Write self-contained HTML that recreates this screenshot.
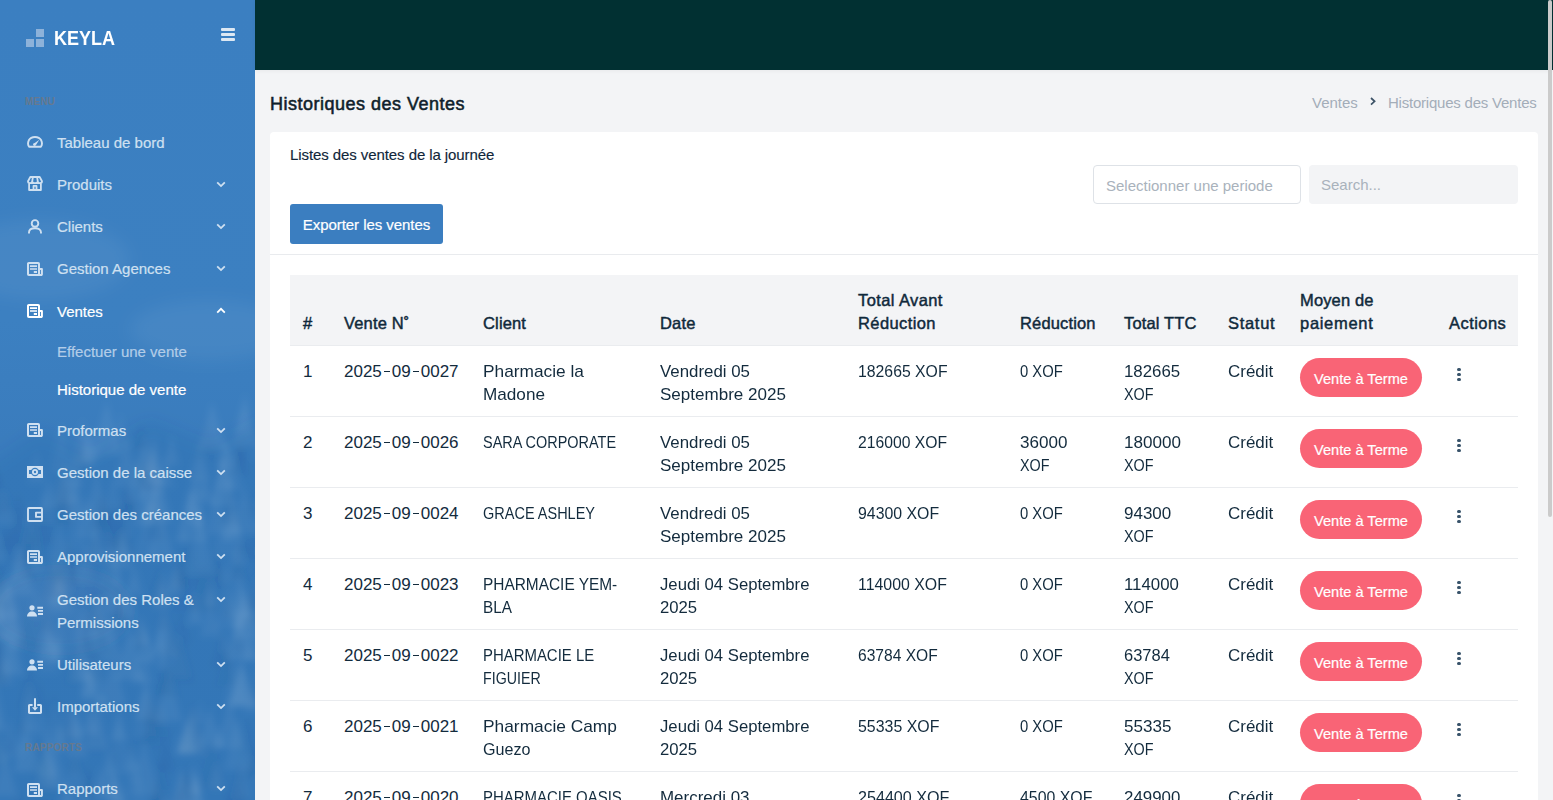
<!DOCTYPE html>
<html><head><meta charset="utf-8">
<style>
*{box-sizing:border-box;margin:0;padding:0}
html,body{width:1553px;height:800px;overflow:hidden;background:#f3f4f6;font-family:"Liberation Sans",sans-serif}
#side{position:absolute;left:0;top:0;width:255px;height:800px;background:linear-gradient(180deg,#3b7fc1 0%,#3c80c1 40%,#3a7cbd 55%,#397bbc 100%);overflow:hidden}
#tex{position:absolute;left:0;top:0}
#top{position:absolute;left:255px;top:0;width:1298px;height:70px;background:#013032;box-shadow:0 1px 4px rgba(0,0,0,.05)}
.logo{position:absolute;left:26px;top:29px}
.logo i{position:absolute;width:8px;height:8px;background:#8db2da}
.brand{position:absolute;left:54px;top:27px;color:#fff;font-weight:700;font-size:20px;line-height:22px;transform:scaleX(.9);transform-origin:0 0}
.burger{position:absolute;left:221px;top:28px;width:14px}
.burger i{position:absolute;left:0;width:14px;height:3px;background:#dde8f3;border-radius:1px}
.sec{position:absolute;left:25px;font-size:10px;font-weight:700;color:#66798f;letter-spacing:.2px;line-height:12px}
.it,.iti,.it.act,.it.acti{position:absolute;left:0;top:0;width:255px;color:#cfe0f1;font-size:15px;line-height:23px}
.it.act,.it.acti{color:#fff}
.it .tx{position:absolute;left:57px;top:0;white-space:nowrap;-webkit-text-stroke:.2px currentColor}
svg.ic,svg.ch{position:absolute}
.sub{position:absolute;left:57px;font-size:15px;color:#b3cde8;white-space:nowrap;line-height:23px;-webkit-text-stroke:.2px currentColor}
.sub.act{color:#fff}
#title{position:absolute;left:270px;top:93px;font-size:18px;font-weight:400;-webkit-text-stroke:.55px #0f1e2b;color:#0f1e2b;line-height:22px;letter-spacing:.5px}
#bc{position:absolute;left:1312px;top:92px;font-size:15px;color:#a3adb9;line-height:22px;white-space:nowrap}
#bc svg{position:absolute;left:58px;top:5px}
#bc .b2{position:absolute;left:76px;top:0;letter-spacing:-.22px}
#card{position:absolute;left:270px;top:132px;width:1268px;height:700px;background:#fff;border-radius:4px}
.lst{position:absolute;left:20px;top:14px;font-size:15px;color:#10263a;line-height:18px;white-space:nowrap;-webkit-text-stroke:.15px #10263a;letter-spacing:-.08px}
.inp1{position:absolute;left:823px;top:33px;width:208px;height:39px;border:1px solid #dee2e7;border-radius:4px;background:#fff;font-size:15px;color:#a9b2bc;padding:11px 0 0 12px;line-height:18px;white-space:nowrap}
.inp2{position:absolute;left:1039px;top:33px;width:209px;height:39px;border-radius:4px;background:#f3f4f6;font-size:15px;color:#a9b2bc;padding:11px 0 0 12px;line-height:18px}
.btn{position:absolute;left:20px;top:72px;width:153px;height:40px;border-radius:3px;background:#3b7ec0;color:#fff;font-size:15px;line-height:42px;text-align:center;white-space:nowrap;-webkit-text-stroke:.2px #fff;letter-spacing:-.05px}
.hr{position:absolute;left:0;top:122px;width:1268px;height:1px;background:#e9ebee}
#sb{position:absolute;left:1548px;top:0;width:4px;height:517px;border-radius:2px;background:#cbcbcb}
#thead{position:absolute;left:290px;top:275px;width:1228px;height:70px;background:#f3f4f6}
.h{position:absolute;font-size:16.5px;font-weight:400;-webkit-text-stroke:.45px #10293b;color:#10293b;line-height:23px;white-space:nowrap;letter-spacing:.15px}
.row{position:absolute;left:290px;width:1228px;height:71px;border-top:1px solid #eaecef;background:#fff}
.c{position:absolute;top:14px;font-size:17px;color:#132b3d;line-height:23px;white-space:nowrap;transform-origin:0 0}
.c0{}
.d{display:inline-block;width:6.4px;height:1.4px;background:currentColor;margin:0 1.8px;vertical-align:5px}

.badge{position:absolute;left:1010px;top:12px;width:122px;height:39px;border-radius:20px;background:#f96476;color:#fff;font-size:14.6px;line-height:43px;-webkit-text-stroke:.2px #fff;text-align:center;white-space:nowrap}
.kebab{position:absolute;left:1167.3px;top:21.5px;width:4px}
.kebab i{position:absolute;left:.2px;width:3.3px;height:3.3px;border-radius:50%;background:#38536a}
</style></head>
<body>
<div id="side">
<svg id="tex" width="255" height="800" viewBox="0 0 255 800"><defs><filter id="bl"><feGaussianBlur stdDeviation="3"/></filter><filter id="bl2"><feGaussianBlur stdDeviation="8"/></filter></defs><g filter="url(#bl2)"><ellipse cx="40" cy="260" rx="90" ry="40" fill="#fff" fill-opacity=".05"/><ellipse cx="210" cy="330" rx="80" ry="30" fill="#fff" fill-opacity=".05"/><path d="M-20 470 L40 430 L90 455 L150 420 L210 445 L280 410 L280 820 L-20 820Z" fill="#1d4f8a" fill-opacity=".10"/><ellipse cx="60" cy="610" rx="70" ry="40" fill="#fff" fill-opacity=".03"/></g><g filter="url(#bl)"><path d="M114.4 766.0L124.0 802.3H104.9Z" fill="#ffffff" fill-opacity="0.046"/><path d="M130.8 731.3L136.5 754.6H125.0Z" fill="#0b3c70" fill-opacity="0.028"/><path d="M180.7 769.1L195.4 822.9H166.0Z" fill="#ffffff" fill-opacity="0.047"/><path d="M-5.9 476.4L0.6 503.0H-12.4Z" fill="#ffffff" fill-opacity="0.026"/><path d="M111.1 619.1L122.3 661.5H100.0Z" fill="#ffffff" fill-opacity="0.048"/><path d="M66.5 779.1L80.2 828.6H52.8Z" fill="#ffffff" fill-opacity="0.036"/><path d="M69.5 706.6L79.3 740.6H59.7Z" fill="#0b3c70" fill-opacity="0.039"/><path d="M223.0 454.2L236.5 506.0H209.5Z" fill="#ffffff" fill-opacity="0.059"/><path d="M10.1 724.1L16.9 753.6H3.3Z" fill="#0b3c70" fill-opacity="0.037"/><path d="M198.5 504.8L203.9 528.4H193.1Z" fill="#ffffff" fill-opacity="0.053"/><path d="M143.8 480.7L154.5 526.4H133.1Z" fill="#ffffff" fill-opacity="0.048"/><path d="M105.7 497.9L121.1 551.8H90.3Z" fill="#0b3c70" fill-opacity="0.036"/><path d="M47.9 734.7L57.8 777.2H38.1Z" fill="#ffffff" fill-opacity="0.060"/><path d="M61.0 567.5L68.0 597.9H54.0Z" fill="#ffffff" fill-opacity="0.028"/><path d="M56.8 571.8L67.5 607.7H46.2Z" fill="#ffffff" fill-opacity="0.042"/><path d="M228.3 438.4L243.1 490.2H213.5Z" fill="#ffffff" fill-opacity="0.034"/><path d="M193.3 488.9L208.8 542.1H177.8Z" fill="#ffffff" fill-opacity="0.046"/><path d="M18.6 787.6L26.4 816.0H10.7Z" fill="#0b3c70" fill-opacity="0.034"/><path d="M154.0 467.8L164.4 513.0H143.6Z" fill="#ffffff" fill-opacity="0.033"/><path d="M224.4 504.7L236.9 556.9H211.9Z" fill="#ffffff" fill-opacity="0.026"/><path d="M112.6 476.1L121.4 509.0H103.8Z" fill="#ffffff" fill-opacity="0.030"/><path d="M235.0 661.3L246.9 705.5H223.1Z" fill="#ffffff" fill-opacity="0.030"/><path d="M-5.1 678.0L7.1 731.7H-17.2Z" fill="#ffffff" fill-opacity="0.047"/><path d="M190.9 807.1L196.9 829.8H184.9Z" fill="#0b3c70" fill-opacity="0.051"/><path d="M192.7 701.5L205.8 753.5H179.6Z" fill="#0b3c70" fill-opacity="0.049"/><path d="M229.6 698.1L243.0 748.3H216.1Z" fill="#ffffff" fill-opacity="0.047"/><path d="M150.2 449.0L162.9 491.4H137.5Z" fill="#0b3c70" fill-opacity="0.056"/><path d="M96.8 646.5L107.0 681.9H86.6Z" fill="#0b3c70" fill-opacity="0.028"/><path d="M-1.8 623.1L6.0 651.1H-9.6Z" fill="#0b3c70" fill-opacity="0.042"/><path d="M243.1 403.6L251.6 434.2H234.7Z" fill="#ffffff" fill-opacity="0.032"/><path d="M239.1 567.0L251.9 618.2H226.3Z" fill="#ffffff" fill-opacity="0.048"/><path d="M108.5 749.0L121.4 799.8H95.6Z" fill="#ffffff" fill-opacity="0.045"/><path d="M27.4 722.5L41.3 772.3H13.6Z" fill="#ffffff" fill-opacity="0.058"/><path d="M36.5 542.9L43.5 570.4H29.5Z" fill="#ffffff" fill-opacity="0.047"/><path d="M76.7 788.0L85.0 823.8H68.5Z" fill="#0b3c70" fill-opacity="0.026"/><path d="M1.4 653.3L10.2 684.1H-7.4Z" fill="#ffffff" fill-opacity="0.026"/><path d="M115.1 735.0L121.7 763.3H108.4Z" fill="#0b3c70" fill-opacity="0.027"/><path d="M112.8 657.1L127.1 705.4H98.5Z" fill="#ffffff" fill-opacity="0.049"/><path d="M120.7 412.6L130.8 449.2H110.5Z" fill="#ffffff" fill-opacity="0.031"/><path d="M85.1 619.0L96.8 660.5H73.4Z" fill="#0b3c70" fill-opacity="0.039"/><path d="M239.2 757.2L249.8 802.5H228.6Z" fill="#0b3c70" fill-opacity="0.041"/><path d="M240.2 609.4L254.7 660.2H225.8Z" fill="#ffffff" fill-opacity="0.058"/><path d="M169.1 672.6L182.4 721.2H155.8Z" fill="#ffffff" fill-opacity="0.050"/><path d="M237.5 783.0L248.5 821.8H226.5Z" fill="#0b3c70" fill-opacity="0.036"/><path d="M225.3 434.2L234.8 469.6H215.9Z" fill="#ffffff" fill-opacity="0.052"/><path d="M-2.2 469.2L9.2 517.2H-13.6Z" fill="#0b3c70" fill-opacity="0.037"/><path d="M28.6 604.8L41.7 650.1H15.6Z" fill="#0b3c70" fill-opacity="0.049"/><path d="M125.5 484.9L132.8 512.6H118.1Z" fill="#0b3c70" fill-opacity="0.035"/><path d="M165.7 731.8L175.5 771.4H155.9Z" fill="#0b3c70" fill-opacity="0.038"/><path d="M237.6 716.1L251.9 770.0H223.4Z" fill="#ffffff" fill-opacity="0.045"/><path d="M137.4 662.4L143.6 683.4H131.1Z" fill="#ffffff" fill-opacity="0.043"/><path d="M210.3 592.5L220.5 636.7H200.1Z" fill="#ffffff" fill-opacity="0.044"/><path d="M253.1 524.1L261.7 560.7H244.6Z" fill="#0b3c70" fill-opacity="0.040"/><path d="M237.7 538.1L244.9 564.8H230.4Z" fill="#ffffff" fill-opacity="0.057"/><path d="M204.3 474.9L212.0 502.9H196.6Z" fill="#ffffff" fill-opacity="0.036"/><path d="M160.4 699.4L166.8 723.7H154.0Z" fill="#ffffff" fill-opacity="0.034"/><path d="M135.8 561.8L145.0 596.2H126.7Z" fill="#ffffff" fill-opacity="0.031"/><path d="M163.6 606.8L177.1 656.6H150.1Z" fill="#ffffff" fill-opacity="0.055"/><path d="M193.7 763.4L201.4 794.5H186.0Z" fill="#ffffff" fill-opacity="0.057"/><path d="M264.5 479.3L272.5 507.7H256.6Z" fill="#ffffff" fill-opacity="0.034"/><path d="M218.8 724.0L225.1 748.4H212.6Z" fill="#ffffff" fill-opacity="0.049"/><path d="M45.3 745.3L57.8 799.2H32.7Z" fill="#0b3c70" fill-opacity="0.043"/><path d="M128.3 514.9L133.5 537.4H123.0Z" fill="#ffffff" fill-opacity="0.026"/><path d="M131.6 490.2L137.9 516.6H125.2Z" fill="#0b3c70" fill-opacity="0.054"/><path d="M244.9 393.4L258.7 446.7H231.1Z" fill="#ffffff" fill-opacity="0.052"/><path d="M118.4 579.3L127.7 620.4H109.1Z" fill="#0b3c70" fill-opacity="0.050"/><path d="M39.8 702.4L48.0 736.5H31.7Z" fill="#ffffff" fill-opacity="0.031"/><path d="M-5.8 720.0L7.2 764.7H-18.7Z" fill="#ffffff" fill-opacity="0.047"/><path d="M154.9 775.4L166.7 823.5H143.1Z" fill="#0b3c70" fill-opacity="0.057"/><path d="M203.9 560.9L218.9 612.3H189.0Z" fill="#0b3c70" fill-opacity="0.049"/><path d="M200.4 700.4L206.1 722.9H194.8Z" fill="#ffffff" fill-opacity="0.041"/><path d="M87.8 667.7L96.1 695.8H79.5Z" fill="#ffffff" fill-opacity="0.048"/><path d="M171.4 622.0L181.5 655.6H161.3Z" fill="#0b3c70" fill-opacity="0.047"/><path d="M199.5 439.3L211.1 480.9H187.8Z" fill="#ffffff" fill-opacity="0.034"/><path d="M3.9 578.2L9.6 601.6H-1.8Z" fill="#ffffff" fill-opacity="0.057"/><path d="M129.7 625.3L144.6 680.1H114.7Z" fill="#ffffff" fill-opacity="0.053"/><path d="M154.3 432.5L166.8 485.1H141.9Z" fill="#ffffff" fill-opacity="0.042"/><path d="M126.3 434.0L139.9 487.1H112.6Z" fill="#ffffff" fill-opacity="0.043"/><path d="M90.5 661.1L100.3 700.7H80.8Z" fill="#ffffff" fill-opacity="0.050"/><path d="M-6.1 458.2L1.0 483.7H-13.3Z" fill="#0b3c70" fill-opacity="0.039"/><path d="M195.8 772.4L208.0 825.5H183.6Z" fill="#ffffff" fill-opacity="0.057"/><path d="M121.3 530.5L132.7 568.8H110.0Z" fill="#ffffff" fill-opacity="0.050"/><path d="M259.2 657.4L265.7 681.4H252.6Z" fill="#ffffff" fill-opacity="0.041"/><path d="M4.3 488.7L14.1 524.2H-5.5Z" fill="#ffffff" fill-opacity="0.041"/><path d="M150.1 707.6L161.7 746.2H138.5Z" fill="#0b3c70" fill-opacity="0.058"/><path d="M55.6 742.0L68.5 789.4H42.7Z" fill="#ffffff" fill-opacity="0.038"/><path d="M178.4 634.8L190.3 677.0H166.5Z" fill="#ffffff" fill-opacity="0.032"/><path d="M259.4 763.8L264.3 785.2H254.5Z" fill="#ffffff" fill-opacity="0.034"/><path d="M161.4 626.3L166.6 648.9H156.2Z" fill="#ffffff" fill-opacity="0.049"/><path d="M163.6 603.4L170.4 630.8H156.7Z" fill="#0b3c70" fill-opacity="0.051"/><path d="M10.4 717.4L22.3 759.3H-1.4Z" fill="#ffffff" fill-opacity="0.032"/><path d="M61.0 570.0L73.8 612.9H48.1Z" fill="#ffffff" fill-opacity="0.036"/><path d="M195.2 591.3L202.8 624.2H187.5Z" fill="#ffffff" fill-opacity="0.056"/><path d="M12.8 606.3L23.7 650.3H1.9Z" fill="#ffffff" fill-opacity="0.052"/><path d="M48.6 478.4L57.2 509.0H40.1Z" fill="#ffffff" fill-opacity="0.049"/><path d="M29.3 698.1L37.0 730.9H21.6Z" fill="#ffffff" fill-opacity="0.050"/><path d="M242.6 763.0L252.7 798.3H232.5Z" fill="#ffffff" fill-opacity="0.036"/><path d="M99.9 765.1L107.1 793.8H92.7Z" fill="#ffffff" fill-opacity="0.038"/><path d="M98.8 491.5L110.1 531.2H87.5Z" fill="#0b3c70" fill-opacity="0.044"/><path d="M144.8 685.4L157.3 736.3H132.3Z" fill="#ffffff" fill-opacity="0.026"/><path d="M139.6 774.8L151.9 817.6H127.4Z" fill="#ffffff" fill-opacity="0.027"/><path d="M206.7 413.9L220.1 459.7H193.3Z" fill="#0b3c70" fill-opacity="0.028"/><path d="M29.6 681.2L36.5 709.8H22.7Z" fill="#ffffff" fill-opacity="0.052"/><path d="M200.3 520.0L215.1 573.9H185.5Z" fill="#ffffff" fill-opacity="0.042"/><path d="M188.3 764.2L198.1 798.6H178.4Z" fill="#0b3c70" fill-opacity="0.048"/><path d="M211.6 735.7L226.2 789.2H197.0Z" fill="#0b3c70" fill-opacity="0.043"/><path d="M210.6 580.6L217.7 605.7H203.6Z" fill="#ffffff" fill-opacity="0.060"/><path d="M36.1 586.8L45.1 617.0H27.1Z" fill="#ffffff" fill-opacity="0.027"/><path d="M21.6 726.2L27.6 752.5H15.5Z" fill="#ffffff" fill-opacity="0.041"/><path d="M240.1 437.4L246.4 463.8H233.7Z" fill="#0b3c70" fill-opacity="0.033"/><path d="M153.6 484.0L160.7 513.9H146.5Z" fill="#ffffff" fill-opacity="0.052"/><path d="M140.8 615.5L149.3 644.6H132.3Z" fill="#ffffff" fill-opacity="0.057"/><path d="M140.5 621.6L146.9 649.3H134.2Z" fill="#0b3c70" fill-opacity="0.058"/><path d="M95.9 624.3L104.7 653.9H87.0Z" fill="#ffffff" fill-opacity="0.048"/><path d="M-7.0 562.0L6.3 609.9H-20.3Z" fill="#ffffff" fill-opacity="0.046"/><path d="M33.2 509.9L46.4 560.3H19.9Z" fill="#0b3c70" fill-opacity="0.047"/><path d="M63.3 478.8L73.9 525.8H52.7Z" fill="#0b3c70" fill-opacity="0.054"/><path d="M216.1 489.4L226.5 534.5H205.6Z" fill="#ffffff" fill-opacity="0.042"/><path d="M252.8 744.4L261.5 775.0H244.1Z" fill="#0b3c70" fill-opacity="0.040"/><path d="M15.0 525.0L25.3 564.0H4.7Z" fill="#0b3c70" fill-opacity="0.031"/><path d="M75.6 456.2L83.6 486.9H67.7Z" fill="#ffffff" fill-opacity="0.050"/><path d="M179.0 552.9L189.7 589.0H168.2Z" fill="#0b3c70" fill-opacity="0.054"/><path d="M-6.6 698.7L1.0 727.0H-14.2Z" fill="#ffffff" fill-opacity="0.041"/><path d="M262.7 490.0L273.0 531.5H252.4Z" fill="#ffffff" fill-opacity="0.038"/><path d="M72.0 562.1L82.6 605.5H61.4Z" fill="#0b3c70" fill-opacity="0.032"/><path d="M80.6 635.9L91.9 681.2H69.3Z" fill="#ffffff" fill-opacity="0.054"/><path d="M28.7 664.4L39.4 709.2H18.0Z" fill="#0b3c70" fill-opacity="0.039"/><path d="M153.0 499.4L159.0 524.9H147.0Z" fill="#ffffff" fill-opacity="0.039"/><path d="M243.2 596.0L255.2 638.6H231.1Z" fill="#ffffff" fill-opacity="0.054"/><path d="M81.1 434.5L90.6 468.5H71.7Z" fill="#0b3c70" fill-opacity="0.059"/><path d="M171.6 433.8L179.5 465.4H163.6Z" fill="#ffffff" fill-opacity="0.048"/><path d="M93.8 704.1L107.1 753.0H80.6Z" fill="#0b3c70" fill-opacity="0.031"/><path d="M238.3 543.2L247.2 580.8H229.5Z" fill="#0b3c70" fill-opacity="0.050"/><path d="M131.9 743.9L139.9 770.8H124.0Z" fill="#ffffff" fill-opacity="0.047"/><path d="M12.9 631.1L24.0 675.5H1.8Z" fill="#ffffff" fill-opacity="0.058"/><path d="M117.3 795.0L124.6 819.8H110.1Z" fill="#ffffff" fill-opacity="0.044"/><path d="M144.1 740.4L159.8 795.1H128.4Z" fill="#ffffff" fill-opacity="0.046"/><path d="M216.8 760.9L224.4 789.4H209.2Z" fill="#ffffff" fill-opacity="0.054"/><path d="M140.7 423.0L148.5 449.3H132.8Z" fill="#0b3c70" fill-opacity="0.058"/><path d="M74.6 704.0L83.6 737.4H65.6Z" fill="#ffffff" fill-opacity="0.053"/><path d="M44.9 489.1L53.8 522.6H35.9Z" fill="#ffffff" fill-opacity="0.031"/><path d="M62.5 549.5L72.2 592.0H52.8Z" fill="#ffffff" fill-opacity="0.048"/><path d="M253.8 591.6L263.2 626.0H244.5Z" fill="#0b3c70" fill-opacity="0.049"/><path d="M196.7 778.6L211.0 827.9H182.5Z" fill="#ffffff" fill-opacity="0.039"/><path d="M145.6 624.5L155.5 662.9H135.8Z" fill="#ffffff" fill-opacity="0.057"/><path d="M5.0 750.5L17.3 796.1H-7.3Z" fill="#ffffff" fill-opacity="0.051"/><path d="M153.2 448.0L162.6 483.7H143.8Z" fill="#ffffff" fill-opacity="0.039"/><path d="M181.1 512.4L188.9 543.1H173.3Z" fill="#ffffff" fill-opacity="0.033"/><path d="M240.6 657.8L253.5 708.2H227.7Z" fill="#ffffff" fill-opacity="0.053"/><path d="M195.3 770.1L202.0 793.6H188.7Z" fill="#ffffff" fill-opacity="0.029"/><path d="M251.5 486.2L259.1 516.7H243.9Z" fill="#0b3c70" fill-opacity="0.027"/><path d="M214.2 539.3L223.5 579.8H205.0Z" fill="#0b3c70" fill-opacity="0.026"/><path d="M74.7 751.9L88.8 806.1H60.5Z" fill="#ffffff" fill-opacity="0.032"/><path d="M243.7 484.3L256.1 533.6H231.3Z" fill="#ffffff" fill-opacity="0.042"/><path d="M231.9 499.3L242.0 541.4H221.8Z" fill="#ffffff" fill-opacity="0.056"/><path d="M19.2 543.7L34.1 595.2H4.2Z" fill="#ffffff" fill-opacity="0.050"/><path d="M181.4 609.4L186.9 632.2H175.9Z" fill="#0b3c70" fill-opacity="0.036"/><path d="M44.0 501.7L56.3 544.9H31.7Z" fill="#0b3c70" fill-opacity="0.038"/><path d="M233.2 504.9L242.2 535.4H224.2Z" fill="#ffffff" fill-opacity="0.048"/><path d="M166.0 787.9L175.4 823.3H156.6Z" fill="#ffffff" fill-opacity="0.044"/><path d="M154.9 493.4L166.1 541.5H143.8Z" fill="#0b3c70" fill-opacity="0.035"/><path d="M57.6 636.2L65.4 662.8H49.9Z" fill="#ffffff" fill-opacity="0.060"/><path d="M116.9 558.5L130.7 611.1H103.2Z" fill="#ffffff" fill-opacity="0.031"/><path d="M167.4 651.6L179.9 699.0H154.9Z" fill="#0b3c70" fill-opacity="0.043"/><path d="M178.2 785.6L185.6 811.7H170.8Z" fill="#0b3c70" fill-opacity="0.031"/><path d="M54.7 700.4L68.2 747.9H41.2Z" fill="#ffffff" fill-opacity="0.033"/><path d="M50.8 631.4L56.6 652.6H45.1Z" fill="#ffffff" fill-opacity="0.050"/><path d="M230.0 468.3L235.4 489.0H224.6Z" fill="#ffffff" fill-opacity="0.040"/><path d="M62.3 458.4L76.2 510.2H48.5Z" fill="#0b3c70" fill-opacity="0.044"/><path d="M55.4 549.2L60.8 570.7H50.1Z" fill="#ffffff" fill-opacity="0.047"/><path d="M62.8 457.3L74.4 506.0H51.2Z" fill="#ffffff" fill-opacity="0.034"/><path d="M179.9 730.7L185.6 752.9H174.3Z" fill="#ffffff" fill-opacity="0.038"/><path d="M256.9 572.4L270.8 619.1H243.0Z" fill="#ffffff" fill-opacity="0.030"/><path d="M194.9 472.4L206.9 523.5H182.8Z" fill="#ffffff" fill-opacity="0.039"/><path d="M106.7 400.5L122.2 455.4H91.2Z" fill="#ffffff" fill-opacity="0.051"/><path d="M59.6 523.3L70.3 559.5H49.0Z" fill="#ffffff" fill-opacity="0.038"/><path d="M259.8 426.0L269.2 460.1H250.5Z" fill="#ffffff" fill-opacity="0.027"/><path d="M181.0 631.5L194.3 682.6H167.8Z" fill="#0b3c70" fill-opacity="0.039"/><path d="M94.8 522.6L102.5 554.8H87.1Z" fill="#ffffff" fill-opacity="0.044"/><path d="M46.0 601.5L54.0 632.3H38.0Z" fill="#0b3c70" fill-opacity="0.060"/><path d="M227.2 560.4L233.5 582.9H221.0Z" fill="#ffffff" fill-opacity="0.038"/><path d="M-4.9 526.9L5.0 560.7H-14.8Z" fill="#ffffff" fill-opacity="0.050"/><path d="M89.3 773.2L98.5 805.8H80.1Z" fill="#0b3c70" fill-opacity="0.050"/><path d="M-4.4 586.6L2.3 609.5H-11.1Z" fill="#0b3c70" fill-opacity="0.036"/><path d="M132.8 563.4L139.3 591.8H126.3Z" fill="#ffffff" fill-opacity="0.030"/><path d="M-1.3 584.1L7.9 623.1H-10.4Z" fill="#ffffff" fill-opacity="0.050"/><path d="M189.5 486.1L196.2 513.3H182.8Z" fill="#ffffff" fill-opacity="0.050"/><path d="M96.3 531.4L103.9 561.6H88.7Z" fill="#ffffff" fill-opacity="0.033"/><path d="M-3.3 632.8L11.1 681.1H-17.7Z" fill="#0b3c70" fill-opacity="0.035"/><path d="M242.7 661.6L255.6 705.0H229.9Z" fill="#ffffff" fill-opacity="0.055"/><path d="M163.9 569.5L171.7 603.2H156.2Z" fill="#ffffff" fill-opacity="0.038"/><path d="M126.7 475.4L135.6 509.5H117.8Z" fill="#0b3c70" fill-opacity="0.031"/><path d="M55.9 545.7L64.2 580.5H47.7Z" fill="#0b3c70" fill-opacity="0.045"/><path d="M142.1 442.4L150.6 476.1H133.6Z" fill="#ffffff" fill-opacity="0.027"/><path d="M5.0 648.2L14.1 684.6H-4.1Z" fill="#ffffff" fill-opacity="0.034"/><path d="M85.4 651.5L93.5 680.7H77.4Z" fill="#ffffff" fill-opacity="0.032"/><path d="M159.2 565.3L171.1 605.5H147.3Z" fill="#0b3c70" fill-opacity="0.052"/><path d="M160.7 578.4L169.2 608.1H152.2Z" fill="#ffffff" fill-opacity="0.056"/><path d="M240.1 437.3L249.5 475.0H230.8Z" fill="#0b3c70" fill-opacity="0.038"/><path d="M31.2 500.5L41.8 544.3H20.6Z" fill="#ffffff" fill-opacity="0.025"/><path d="M98.3 595.6L109.7 638.4H86.9Z" fill="#ffffff" fill-opacity="0.047"/><path d="M218.6 557.4L227.9 589.5H209.2Z" fill="#0b3c70" fill-opacity="0.036"/><path d="M181.2 767.8L192.8 816.7H169.7Z" fill="#ffffff" fill-opacity="0.047"/><path d="M145.0 512.9L157.3 559.1H132.8Z" fill="#ffffff" fill-opacity="0.033"/><path d="M79.4 621.5L85.0 645.9H73.8Z" fill="#ffffff" fill-opacity="0.027"/><path d="M183.8 564.6L196.1 611.6H171.5Z" fill="#0b3c70" fill-opacity="0.031"/><path d="M229.2 487.6L240.0 525.4H218.5Z" fill="#0b3c70" fill-opacity="0.039"/><path d="M59.2 563.7L68.2 595.4H50.3Z" fill="#0b3c70" fill-opacity="0.054"/><path d="M146.1 677.7L158.1 719.5H134.0Z" fill="#ffffff" fill-opacity="0.053"/><path d="M93.7 529.6L99.6 556.1H87.7Z" fill="#0b3c70" fill-opacity="0.045"/><path d="M256.9 667.7L266.3 702.3H247.4Z" fill="#0b3c70" fill-opacity="0.039"/><path d="M261.9 687.2L267.4 711.4H256.4Z" fill="#0b3c70" fill-opacity="0.035"/><path d="M263.2 534.2L268.8 555.1H257.7Z" fill="#ffffff" fill-opacity="0.042"/><path d="M75.0 744.1L82.6 774.1H67.4Z" fill="#0b3c70" fill-opacity="0.047"/><path d="M259.8 669.6L270.9 708.8H248.6Z" fill="#ffffff" fill-opacity="0.030"/><path d="M19.5 544.8L28.1 581.9H10.8Z" fill="#ffffff" fill-opacity="0.036"/><path d="M145.6 654.0L152.8 683.6H138.5Z" fill="#ffffff" fill-opacity="0.042"/><path d="M61.4 421.3L74.1 472.5H48.7Z" fill="#ffffff" fill-opacity="0.028"/><path d="M122.9 504.9L136.1 555.2H109.8Z" fill="#0b3c70" fill-opacity="0.040"/><path d="M98.9 612.8L110.6 655.8H87.2Z" fill="#0b3c70" fill-opacity="0.035"/><path d="M227.8 579.8L241.5 629.0H214.0Z" fill="#ffffff" fill-opacity="0.031"/><path d="M36.4 450.6L45.6 483.2H27.3Z" fill="#ffffff" fill-opacity="0.036"/><path d="M-7.1 794.8L-1.7 815.2H-12.5Z" fill="#0b3c70" fill-opacity="0.053"/><path d="M192.2 705.2L206.1 754.1H178.4Z" fill="#ffffff" fill-opacity="0.060"/><path d="M251.4 685.0L259.8 713.8H242.9Z" fill="#ffffff" fill-opacity="0.026"/><path d="M52.5 557.6L64.8 600.5H40.2Z" fill="#0b3c70" fill-opacity="0.038"/><path d="M87.4 763.2L94.6 794.5H80.1Z" fill="#0b3c70" fill-opacity="0.037"/><path d="M48.1 629.5L58.6 673.3H37.7Z" fill="#ffffff" fill-opacity="0.029"/><path d="M86.3 428.9L95.9 466.5H76.7Z" fill="#ffffff" fill-opacity="0.036"/><path d="M251.9 750.4L260.7 781.7H243.1Z" fill="#0b3c70" fill-opacity="0.029"/><path d="M108.3 527.4L117.8 561.7H98.7Z" fill="#ffffff" fill-opacity="0.031"/><path d="M176.2 562.8L182.9 589.2H169.6Z" fill="#ffffff" fill-opacity="0.060"/><path d="M164.5 666.6L172.0 694.0H157.1Z" fill="#0b3c70" fill-opacity="0.056"/><path d="M162.9 643.8L169.8 667.8H156.0Z" fill="#ffffff" fill-opacity="0.049"/><path d="M173.0 567.4L180.6 595.4H165.4Z" fill="#ffffff" fill-opacity="0.045"/><path d="M-1.1 599.2L9.8 640.0H-12.1Z" fill="#ffffff" fill-opacity="0.058"/><path d="M118.9 708.9L127.6 739.9H110.2Z" fill="#ffffff" fill-opacity="0.060"/><path d="M228.6 788.8L237.6 826.0H219.5Z" fill="#0b3c70" fill-opacity="0.054"/><path d="M247.9 716.7L259.2 754.7H236.5Z" fill="#0b3c70" fill-opacity="0.027"/><path d="M185.7 718.6L195.2 754.5H176.2Z" fill="#ffffff" fill-opacity="0.055"/><path d="M66.9 463.3L78.1 502.7H55.7Z" fill="#ffffff" fill-opacity="0.042"/><path d="M210.0 707.1L221.5 746.3H198.5Z" fill="#ffffff" fill-opacity="0.053"/><path d="M90.6 427.8L99.9 459.9H81.3Z" fill="#ffffff" fill-opacity="0.054"/><path d="M40.0 733.8L52.1 775.4H27.8Z" fill="#0b3c70" fill-opacity="0.028"/><path d="M46.9 741.2L57.8 786.7H36.0Z" fill="#ffffff" fill-opacity="0.048"/><path d="M-5.8 543.5L4.6 585.5H-16.1Z" fill="#0b3c70" fill-opacity="0.046"/><path d="M39.7 678.9L48.2 715.2H31.2Z" fill="#0b3c70" fill-opacity="0.029"/><path d="M157.8 468.2L172.9 523.0H142.6Z" fill="#ffffff" fill-opacity="0.051"/><path d="M75.3 475.1L86.1 517.2H64.5Z" fill="#ffffff" fill-opacity="0.054"/><path d="M115.6 776.4L124.5 808.5H106.7Z" fill="#ffffff" fill-opacity="0.033"/><path d="M68.3 536.0L82.1 585.9H54.6Z" fill="#0b3c70" fill-opacity="0.041"/><path d="M96.6 653.6L104.8 689.3H88.4Z" fill="#ffffff" fill-opacity="0.040"/><path d="M111.2 541.9L123.5 586.3H99.0Z" fill="#ffffff" fill-opacity="0.034"/><path d="M26.3 545.1L35.0 579.8H17.6Z" fill="#0b3c70" fill-opacity="0.054"/><path d="M152.4 444.0L164.3 495.3H140.5Z" fill="#ffffff" fill-opacity="0.038"/><path d="M188.8 535.0L204.1 586.5H173.6Z" fill="#0b3c70" fill-opacity="0.026"/><path d="M119.0 597.9L127.6 629.0H110.5Z" fill="#0b3c70" fill-opacity="0.046"/><path d="M258.5 559.7L271.9 608.7H245.1Z" fill="#0b3c70" fill-opacity="0.050"/><path d="M8.3 575.6L18.7 618.5H-2.1Z" fill="#ffffff" fill-opacity="0.060"/><path d="M91.7 552.6L102.4 598.6H81.1Z" fill="#0b3c70" fill-opacity="0.031"/><path d="M161.3 510.4L174.9 558.8H147.8Z" fill="#ffffff" fill-opacity="0.052"/><path d="M118.9 721.8L134.4 774.9H103.4Z" fill="#ffffff" fill-opacity="0.026"/><path d="M137.4 453.7L149.2 501.3H125.6Z" fill="#ffffff" fill-opacity="0.043"/><path d="M146.2 435.2L155.5 473.1H136.8Z" fill="#ffffff" fill-opacity="0.052"/><path d="M103.8 490.2L113.4 526.0H94.3Z" fill="#0b3c70" fill-opacity="0.041"/><path d="M18.7 492.6L33.0 546.5H4.4Z" fill="#0b3c70" fill-opacity="0.039"/><path d="M227.6 597.0L232.4 617.3H222.7Z" fill="#0b3c70" fill-opacity="0.054"/><path d="M186.0 623.1L190.9 644.1H181.1Z" fill="#0b3c70" fill-opacity="0.036"/><path d="M166.8 453.2L174.8 487.7H158.9Z" fill="#ffffff" fill-opacity="0.034"/><path d="M242.7 584.4L255.2 627.3H230.2Z" fill="#ffffff" fill-opacity="0.058"/><path d="M127.8 587.7L136.3 618.1H119.2Z" fill="#ffffff" fill-opacity="0.034"/><path d="M108.0 558.8L117.1 593.9H99.0Z" fill="#0b3c70" fill-opacity="0.027"/><path d="M7.0 637.8L15.2 671.8H-1.2Z" fill="#ffffff" fill-opacity="0.028"/><path d="M76.5 504.5L88.6 550.8H64.4Z" fill="#ffffff" fill-opacity="0.025"/><path d="M255.7 607.7L269.3 661.3H242.2Z" fill="#ffffff" fill-opacity="0.046"/><path d="M72.8 652.8L81.0 683.9H64.7Z" fill="#0b3c70" fill-opacity="0.043"/><path d="M4.6 523.0L13.0 552.4H-3.8Z" fill="#0b3c70" fill-opacity="0.040"/><path d="M100.6 686.5L107.5 709.5H93.8Z" fill="#ffffff" fill-opacity="0.054"/><path d="M77.3 714.2L87.0 756.7H67.5Z" fill="#ffffff" fill-opacity="0.052"/><path d="M161.8 760.6L171.4 802.9H152.2Z" fill="#0b3c70" fill-opacity="0.058"/><path d="M149.5 690.6L159.0 725.2H139.9Z" fill="#0b3c70" fill-opacity="0.059"/><path d="M10.6 594.8L22.3 641.1H-1.1Z" fill="#ffffff" fill-opacity="0.041"/><path d="M22.4 711.3L27.7 733.8H17.2Z" fill="#0b3c70" fill-opacity="0.054"/><path d="M140.7 454.1L149.9 484.9H131.6Z" fill="#0b3c70" fill-opacity="0.045"/><path d="M48.1 612.9L59.6 662.2H36.5Z" fill="#ffffff" fill-opacity="0.056"/><path d="M-1.4 566.5L11.5 610.2H-14.2Z" fill="#0b3c70" fill-opacity="0.042"/><path d="M96.7 469.7L107.6 515.7H85.8Z" fill="#ffffff" fill-opacity="0.046"/><path d="M85.2 542.1L96.0 582.8H74.5Z" fill="#ffffff" fill-opacity="0.039"/><path d="M221.6 630.1L232.6 666.9H210.6Z" fill="#0b3c70" fill-opacity="0.036"/><path d="M54.2 690.0L64.0 730.1H44.4Z" fill="#0b3c70" fill-opacity="0.027"/><path d="M93.8 587.6L104.9 629.2H82.7Z" fill="#0b3c70" fill-opacity="0.059"/><path d="M115.3 500.2L126.1 546.5H104.6Z" fill="#0b3c70" fill-opacity="0.036"/><path d="M-0.4 643.8L9.5 683.1H-10.2Z" fill="#0b3c70" fill-opacity="0.030"/><path d="M200.3 452.2L211.8 499.6H188.8Z" fill="#ffffff" fill-opacity="0.032"/><path d="M157.7 697.1L169.5 737.4H145.9Z" fill="#0b3c70" fill-opacity="0.057"/><path d="M90.1 703.7L98.8 733.9H81.4Z" fill="#ffffff" fill-opacity="0.050"/><path d="M58.5 623.8L65.7 652.7H51.4Z" fill="#ffffff" fill-opacity="0.034"/><path d="M123.3 528.1L131.2 557.8H115.5Z" fill="#ffffff" fill-opacity="0.056"/><path d="M226.4 647.3L237.3 686.3H215.5Z" fill="#0b3c70" fill-opacity="0.044"/><path d="M242.8 531.0L249.3 552.9H236.3Z" fill="#0b3c70" fill-opacity="0.038"/><path d="M54.2 557.3L67.7 602.8H40.7Z" fill="#ffffff" fill-opacity="0.043"/><path d="M85.9 787.2L93.0 811.1H78.9Z" fill="#ffffff" fill-opacity="0.048"/><path d="M238.0 628.8L245.2 653.0H230.7Z" fill="#0b3c70" fill-opacity="0.036"/><path d="M6.9 489.5L12.5 510.5H1.3Z" fill="#0b3c70" fill-opacity="0.059"/><path d="M225.2 629.6L231.2 652.3H219.2Z" fill="#ffffff" fill-opacity="0.031"/><path d="M87.4 493.4L98.9 538.1H76.0Z" fill="#ffffff" fill-opacity="0.042"/><path d="M123.9 780.3L133.2 819.9H114.6Z" fill="#ffffff" fill-opacity="0.036"/><path d="M183.1 768.2L198.7 821.4H167.4Z" fill="#0b3c70" fill-opacity="0.055"/><path d="M-4.4 642.8L7.5 686.8H-16.4Z" fill="#0b3c70" fill-opacity="0.046"/><path d="M13.8 794.7L18.7 815.8H8.8Z" fill="#0b3c70" fill-opacity="0.055"/><path d="M-3.4 722.4L8.3 766.5H-15.0Z" fill="#0b3c70" fill-opacity="0.045"/><path d="M212.1 401.7L226.4 449.5H197.9Z" fill="#ffffff" fill-opacity="0.054"/><path d="M82.3 418.0L93.8 465.0H70.8Z" fill="#ffffff" fill-opacity="0.045"/><path d="M82.2 608.7L90.4 637.0H74.0Z" fill="#ffffff" fill-opacity="0.031"/><path d="M59.7 720.4L67.4 752.0H52.0Z" fill="#ffffff" fill-opacity="0.048"/><path d="M133.8 756.4L140.2 782.9H127.3Z" fill="#ffffff" fill-opacity="0.036"/><path d="M189.8 713.3L198.8 752.2H180.8Z" fill="#ffffff" fill-opacity="0.052"/><path d="M49.9 793.3L58.2 826.3H41.6Z" fill="#0b3c70" fill-opacity="0.057"/><path d="M96.5 702.0L108.3 749.3H84.6Z" fill="#ffffff" fill-opacity="0.053"/><path d="M68.9 701.3L79.4 737.9H58.4Z" fill="#ffffff" fill-opacity="0.025"/></g></svg>
  <div class="logo"><i style="left:10px;top:0"></i><i style="left:0;top:10px"></i><i style="left:10px;top:10px"></i></div>
  <div class="brand">KEYLA</div>
  <div class="burger"><i style="top:0"></i><i style="top:5px"></i><i style="top:10px"></i></div>
  <div class="sec" style="top:96px">MENU</div>
  <div class="sec" style="top:742px">RAPPORTS</div>
<div class="it" style="top:131px"><span class="tx">Tableau de bord</span></div>
<div class="iti" ><svg class="ic" width="16" height="12" viewBox="0 0 16 12" style="left:27px;top:136px"><path d="M2.1 10.8H13.9C15.1 9 15.2 6.4 14.2 4.3 12.9 1.9 10.6 1 8 1S3.1 1.9 1.8 4.3C.8 6.4.9 9 2.1 10.8Z" fill="none" stroke="currentColor" stroke-width="1.9" stroke-linejoin="round"/><path d="M6.3 7.9 12.3 3.7 8.7 9.5Z" fill="currentColor"/><circle cx="7.4" cy="8.6" r="1.3" fill="currentColor"/></svg></div>
<div class="it" style="top:173px"><span class="tx">Produits</span></div>
<div class="iti" ><svg class="ic" width="16" height="15" viewBox="0 0 16 15" style="left:27px;top:176px"><path d="M3.3 1H12.7L15 5.2C15 6.5 14 7.2 12.9 7.2 11.8 7.2 10.8 6.5 10.8 5.2 10.8 6.5 9.3 7.2 8 7.2S5.2 6.5 5.2 5.2C5.2 6.5 4.2 7.2 3.1 7.2 2 7.2 1 6.5 1 5.2Z M5.9 1.2 5.2 5.3 M10.1 1.2 10.8 5.3 M2.1 7.2V14H13.9V7.2 M6.5 14V9.9H9.5V14" fill="none" stroke="currentColor" stroke-width="1.8" stroke-linejoin="round"/></svg></div>
<div class="iti"><svg class="ch" width="10" height="7" viewBox="0 0 10 7" style="left:216px;top:180.6px"><path d="M1.2 1.3 5 5.1 8.8 1.3" fill="none" stroke="currentColor" stroke-width="1.8"/></svg></div>
<div class="it" style="top:215px"><span class="tx">Clients</span></div>
<div class="iti" ><svg class="ic" width="16" height="16" viewBox="0 0 16 16" style="left:27px;top:218.5px"><circle cx="8" cy="4.4" r="3.3" fill="none" stroke="currentColor" stroke-width="1.9"/><path d="M2 14.6V13.4C2 10.7 4.5 9.2 8 9.2S14 10.7 14 13.4V14.6" fill="none" stroke="currentColor" stroke-width="1.9"/></svg></div>
<div class="iti"><svg class="ch" width="10" height="7" viewBox="0 0 10 7" style="left:216px;top:222.6px"><path d="M1.2 1.3 5 5.1 8.8 1.3" fill="none" stroke="currentColor" stroke-width="1.8"/></svg></div>
<div class="it" style="top:257px"><span class="tx">Gestion Agences</span></div>
<div class="iti" ><svg class="ic" width="16" height="14" viewBox="0 0 16 14" style="left:27px;top:262px"><path d="M1.8 1H11.2A.8.8 0 0 1 12 1.8V13H1.8A.8.8 0 0 1 1 12.2V1.8A.8.8 0 0 1 1.8 1Z M12 7H14.9V12.2A.8.8 0 0 1 14.1 13H12" fill="none" stroke="currentColor" stroke-width="2" stroke-linejoin="round"/><path d="M3 4.1H10 M3 7H10" stroke="currentColor" stroke-width="1.7"/><rect x="6.8" y="9" width="3.2" height="2" fill="currentColor"/></svg></div>
<div class="iti"><svg class="ch" width="10" height="7" viewBox="0 0 10 7" style="left:216px;top:264.6px"><path d="M1.2 1.3 5 5.1 8.8 1.3" fill="none" stroke="currentColor" stroke-width="1.8"/></svg></div>
<div class="it act" style="top:300px"><span class="tx">Ventes</span></div>
<div class="it acti" ><svg class="ic" width="16" height="14" viewBox="0 0 16 14" style="left:27px;top:304px"><path d="M1.8 1H11.2A.8.8 0 0 1 12 1.8V13H1.8A.8.8 0 0 1 1 12.2V1.8A.8.8 0 0 1 1.8 1Z M12 7H14.9V12.2A.8.8 0 0 1 14.1 13H12" fill="none" stroke="currentColor" stroke-width="2" stroke-linejoin="round"/><path d="M3 4.1H10 M3 7H10" stroke="currentColor" stroke-width="1.7"/><rect x="6.8" y="9" width="3.2" height="2" fill="currentColor"/></svg></div>
<div class="it acti"><svg class="ch" width="10" height="7" viewBox="0 0 10 7" style="left:216px;top:307.2px"><path d="M1.2 5.6 5 1.8 8.8 5.6" fill="none" stroke="currentColor" stroke-width="1.8"/></svg></div>
<div class="it" style="top:419px"><span class="tx">Proformas</span></div>
<div class="iti" ><svg class="ic" width="16" height="14" viewBox="0 0 16 14" style="left:27px;top:423px"><path d="M1.8 1H11.2A.8.8 0 0 1 12 1.8V13H1.8A.8.8 0 0 1 1 12.2V1.8A.8.8 0 0 1 1.8 1Z M12 7H14.9V12.2A.8.8 0 0 1 14.1 13H12" fill="none" stroke="currentColor" stroke-width="2" stroke-linejoin="round"/><path d="M3 4.1H10 M3 7H10" stroke="currentColor" stroke-width="1.7"/><rect x="6.8" y="9" width="3.2" height="2" fill="currentColor"/></svg></div>
<div class="iti"><svg class="ch" width="10" height="7" viewBox="0 0 10 7" style="left:216px;top:426.6px"><path d="M1.2 1.3 5 5.1 8.8 1.3" fill="none" stroke="currentColor" stroke-width="1.8"/></svg></div>
<div class="it" style="top:461px"><span class="tx">Gestion de la caisse</span></div>
<div class="iti" ><svg class="ic" width="16" height="12" viewBox="0 0 16 12" style="left:27px;top:466px"><rect width="16" height="12" fill="currentColor"/><rect x="2" y="4" width="12" height="4" fill="#3b7fc0"/><circle cx="8" cy="6" r="4.2" fill="#3b7fc0"/><circle cx="8" cy="6" r="3" fill="currentColor"/><circle cx="8" cy="6" r="1.2" fill="#3b7fc0"/></svg></div>
<div class="iti"><svg class="ch" width="10" height="7" viewBox="0 0 10 7" style="left:216px;top:468.6px"><path d="M1.2 1.3 5 5.1 8.8 1.3" fill="none" stroke="currentColor" stroke-width="1.8"/></svg></div>
<div class="it" style="top:503px"><span class="tx">Gestion des créances</span></div>
<div class="iti" ><svg class="ic" width="16" height="15" viewBox="0 0 16 15" style="left:27px;top:507px"><path d="M1.9 1H14.1A.9.9 0 0 1 15 1.9V13.1A.9.9 0 0 1 14.1 14H1.9A.9.9 0 0 1 1 13.1V1.9A.9.9 0 0 1 1.9 1Z M15 5.6H9V9.9H15" fill="none" stroke="currentColor" stroke-width="1.9" stroke-linejoin="round"/></svg></div>
<div class="iti"><svg class="ch" width="10" height="7" viewBox="0 0 10 7" style="left:216px;top:510.6px"><path d="M1.2 1.3 5 5.1 8.8 1.3" fill="none" stroke="currentColor" stroke-width="1.8"/></svg></div>
<div class="it" style="top:545px"><span class="tx">Approvisionnement</span></div>
<div class="iti" ><svg class="ic" width="16" height="14" viewBox="0 0 16 14" style="left:27px;top:550px"><path d="M1.8 1H11.2A.8.8 0 0 1 12 1.8V13H1.8A.8.8 0 0 1 1 12.2V1.8A.8.8 0 0 1 1.8 1Z M12 7H14.9V12.2A.8.8 0 0 1 14.1 13H12" fill="none" stroke="currentColor" stroke-width="2" stroke-linejoin="round"/><path d="M3 4.1H10 M3 7H10" stroke="currentColor" stroke-width="1.7"/><rect x="6.8" y="9" width="3.2" height="2" fill="currentColor"/></svg></div>
<div class="iti"><svg class="ch" width="10" height="7" viewBox="0 0 10 7" style="left:216px;top:552.6px"><path d="M1.2 1.3 5 5.1 8.8 1.3" fill="none" stroke="currentColor" stroke-width="1.8"/></svg></div>
<div class="it" style="top:588px"><span class="tx">Gestion des Roles &amp;<br>Permissions</span></div>
<div class="iti" ><svg class="ic" width="16" height="12" viewBox="0 0 16 12" style="left:27px;top:604.5px"><circle cx="5" cy="2.8" r="2.6" fill="currentColor"/><path d="M0 11.6C0 8.4 2.2 6.4 5 6.4S10 8.4 10 11.6Z" fill="currentColor"/><path d="M10.3 2.8H16 M11 5.9H16 M11 9H16" stroke="currentColor" stroke-width="1.9"/></svg></div>
<div class="iti"><svg class="ch" width="10" height="7" viewBox="0 0 10 7" style="left:216px;top:595.6px"><path d="M1.2 1.3 5 5.1 8.8 1.3" fill="none" stroke="currentColor" stroke-width="1.8"/></svg></div>
<div class="it" style="top:653px"><span class="tx">Utilisateurs</span></div>
<div class="iti" ><svg class="ic" width="16" height="12" viewBox="0 0 16 12" style="left:27px;top:658.5px"><circle cx="5" cy="2.8" r="2.6" fill="currentColor"/><path d="M0 11.6C0 8.4 2.2 6.4 5 6.4S10 8.4 10 11.6Z" fill="currentColor"/><path d="M10.3 2.8H16 M11 5.9H16 M11 9H16" stroke="currentColor" stroke-width="1.9"/></svg></div>
<div class="iti"><svg class="ch" width="10" height="7" viewBox="0 0 10 7" style="left:216px;top:660.6px"><path d="M1.2 1.3 5 5.1 8.8 1.3" fill="none" stroke="currentColor" stroke-width="1.8"/></svg></div>
<div class="it" style="top:695px"><span class="tx">Importations</span></div>
<div class="iti" ><svg class="ic" width="14" height="16" viewBox="0 0 14 16" style="left:28px;top:698px"><path d="M4.6 7H1.6A.6.6 0 0 0 1 7.6V14.4A.6.6 0 0 0 1.6 15H12.4A.6.6 0 0 0 13 14.4V7.6A.6.6 0 0 0 12.4 7H9.2" fill="none" stroke="currentColor" stroke-width="2"/><path d="M7 .2V9.6" stroke="currentColor" stroke-width="2"/><path d="M4 9.2H10L7 12.7Z" fill="currentColor"/></svg></div>
<div class="iti"><svg class="ch" width="10" height="7" viewBox="0 0 10 7" style="left:216px;top:702.6px"><path d="M1.2 1.3 5 5.1 8.8 1.3" fill="none" stroke="currentColor" stroke-width="1.8"/></svg></div>
<div class="it" style="top:777px"><span class="tx">Rapports</span></div>
<div class="iti" ><svg class="ic" width="16" height="14" viewBox="0 0 16 14" style="left:27px;top:782.5px"><path d="M1.8 1H11.2A.8.8 0 0 1 12 1.8V13H1.8A.8.8 0 0 1 1 12.2V1.8A.8.8 0 0 1 1.8 1Z M12 7H14.9V12.2A.8.8 0 0 1 14.1 13H12" fill="none" stroke="currentColor" stroke-width="2" stroke-linejoin="round"/><path d="M3 4.1H10 M3 7H10" stroke="currentColor" stroke-width="1.7"/><rect x="6.8" y="9" width="3.2" height="2" fill="currentColor"/></svg></div>
<div class="iti"><svg class="ch" width="10" height="7" viewBox="0 0 10 7" style="left:216px;top:784.6px"><path d="M1.2 1.3 5 5.1 8.8 1.3" fill="none" stroke="currentColor" stroke-width="1.8"/></svg></div>
  <div class="sub" style="top:340px">Effectuer une vente</div>
  <div class="sub act" style="top:378px">Historique de vente</div>
</div>
<div id="top"></div>
<div id="title">Historiques des Ventes</div>
<div id="bc">Ventes<svg width="6" height="9" viewBox="0 0 6 9"><path d="M1 1 4.6 4.3 1 7.6" fill="none" stroke="#3d5367" stroke-width="1.7"/></svg><span class="b2">Historiques des Ventes</span></div>
<div id="card">
  <div class="lst">Listes des ventes de la journée</div>
  <div class="inp1">Selectionner une periode</div>
  <div class="inp2">Search...</div>
  <div class="btn">Exporter les ventes</div>
  <div class="hr"></div>
</div>
<div id="thead">
  <div class="h" style="left:13px;top:37px">#</div>
  <div class="h" style="left:54px;top:37px">Vente N&#730;</div>
  <div class="h" style="left:193px;top:37px">Client</div>
  <div class="h" style="left:370px;top:37px">Date</div>
  <div class="h" style="left:568px;top:14px;letter-spacing:.4px">Total Avant<br>Réduction</div>
  <div class="h" style="left:730px;top:37px">Réduction</div>
  <div class="h" style="left:834px;top:37px">Total TTC</div>
  <div class="h" style="left:938px;top:37px;letter-spacing:.7px">Statut</div>
  <div class="h" style="left:1010px;top:14px">Moyen de<br><span style="letter-spacing:.7px">paiement</span></div>
  <div class="h" style="left:1159px;top:37px;letter-spacing:.45px">Actions</div>
</div>
<div class="row" style="top:345px">
<div class="c c0" style="left:13px;top:14px">1</div>
<div class="c" style="left:54px;top:14px;transform:scaleX(1.000)">2025<span class=d></span>09<span class=d></span>0027</div>
<div class="c" style="left:193px;top:14px;transform:scaleX(1.017)">Pharmacie la</div><div class="c" style="left:193px;top:37px;transform:scaleX(1.009)">Madone</div>
<div class="c" style="left:370px;top:14px;transform:scaleX(0.991)">Vendredi 05</div><div class="c" style="left:370px;top:37px;transform:scaleX(1.002)">Septembre 2025</div>
<div class="c" style="left:568px;top:14px;transform:scaleX(0.929)">182665 XOF</div>
<div class="c" style="left:730px;top:14px;transform:scaleX(0.872)">0 XOF</div>
<div class="c" style="left:834px;top:14px;transform:scaleX(0.991)">182665</div><div class="c" style="left:834px;top:37px;transform:scaleX(0.846)">XOF</div>
<div class="c" style="left:938px;top:14px;transform:scaleX(0.997)">Crédit</div>
<div class="badge">Vente à Terme</div>
<div class="kebab"><i style="top:0"></i><i style="top:5px"></i><i style="top:10px"></i></div>
</div>
<div class="row" style="top:416px">
<div class="c c0" style="left:13px;top:14px">2</div>
<div class="c" style="left:54px;top:14px;transform:scaleX(1.000)">2025<span class=d></span>09<span class=d></span>0026</div>
<div class="c" style="left:193px;top:14px;transform:scaleX(0.850)">SARA CORPORATE</div>
<div class="c" style="left:370px;top:14px;transform:scaleX(0.991)">Vendredi 05</div><div class="c" style="left:370px;top:37px;transform:scaleX(1.002)">Septembre 2025</div>
<div class="c" style="left:568px;top:14px;transform:scaleX(0.924)">216000 XOF</div>
<div class="c" style="left:730px;top:14px;transform:scaleX(1.004)">36000</div><div class="c" style="left:730px;top:37px;transform:scaleX(0.846)">XOF</div>
<div class="c" style="left:834px;top:14px;transform:scaleX(1.004)">180000</div><div class="c" style="left:834px;top:37px;transform:scaleX(0.846)">XOF</div>
<div class="c" style="left:938px;top:14px;transform:scaleX(0.997)">Crédit</div>
<div class="badge">Vente à Terme</div>
<div class="kebab"><i style="top:0"></i><i style="top:5px"></i><i style="top:10px"></i></div>
</div>
<div class="row" style="top:487px">
<div class="c c0" style="left:13px;top:14px">3</div>
<div class="c" style="left:54px;top:14px;transform:scaleX(1.000)">2025<span class=d></span>09<span class=d></span>0024</div>
<div class="c" style="left:193px;top:14px;transform:scaleX(0.853)">GRACE ASHLEY</div>
<div class="c" style="left:370px;top:14px;transform:scaleX(0.991)">Vendredi 05</div><div class="c" style="left:370px;top:37px;transform:scaleX(1.002)">Septembre 2025</div>
<div class="c" style="left:568px;top:14px;transform:scaleX(0.933)">94300 XOF</div>
<div class="c" style="left:730px;top:14px;transform:scaleX(0.872)">0 XOF</div>
<div class="c" style="left:834px;top:14px;transform:scaleX(0.999)">94300</div><div class="c" style="left:834px;top:37px;transform:scaleX(0.846)">XOF</div>
<div class="c" style="left:938px;top:14px;transform:scaleX(0.997)">Crédit</div>
<div class="badge">Vente à Terme</div>
<div class="kebab"><i style="top:0"></i><i style="top:5px"></i><i style="top:10px"></i></div>
</div>
<div class="row" style="top:558px">
<div class="c c0" style="left:13px;top:14px">4</div>
<div class="c" style="left:54px;top:14px;transform:scaleX(1.000)">2025<span class=d></span>09<span class=d></span>0023</div>
<div class="c" style="left:193px;top:14px;transform:scaleX(0.907)">PHARMACIE YEM-</div><div class="c" style="left:193px;top:37px;transform:scaleX(0.900)">BLA</div>
<div class="c" style="left:370px;top:14px;transform:scaleX(0.982)">Jeudi 04 Septembre</div><div class="c" style="left:370px;top:37px;transform:scaleX(0.982)">2025</div>
<div class="c" style="left:568px;top:14px;transform:scaleX(0.934)">114000 XOF</div>
<div class="c" style="left:730px;top:14px;transform:scaleX(0.872)">0 XOF</div>
<div class="c" style="left:834px;top:14px;transform:scaleX(0.989)">114000</div><div class="c" style="left:834px;top:37px;transform:scaleX(0.846)">XOF</div>
<div class="c" style="left:938px;top:14px;transform:scaleX(0.997)">Crédit</div>
<div class="badge">Vente à Terme</div>
<div class="kebab"><i style="top:0"></i><i style="top:5px"></i><i style="top:10px"></i></div>
</div>
<div class="row" style="top:629px">
<div class="c c0" style="left:13px;top:14px">5</div>
<div class="c" style="left:54px;top:14px;transform:scaleX(1.000)">2025<span class=d></span>09<span class=d></span>0022</div>
<div class="c" style="left:193px;top:14px;transform:scaleX(0.878)">PHARMACIE LE</div><div class="c" style="left:193px;top:37px;transform:scaleX(0.836)">FIGUIER</div>
<div class="c" style="left:370px;top:14px;transform:scaleX(0.982)">Jeudi 04 Septembre</div><div class="c" style="left:370px;top:37px;transform:scaleX(0.982)">2025</div>
<div class="c" style="left:568px;top:14px;transform:scaleX(0.917)">63784 XOF</div>
<div class="c" style="left:730px;top:14px;transform:scaleX(0.872)">0 XOF</div>
<div class="c" style="left:834px;top:14px;transform:scaleX(0.970)">63784</div><div class="c" style="left:834px;top:37px;transform:scaleX(0.846)">XOF</div>
<div class="c" style="left:938px;top:14px;transform:scaleX(0.997)">Crédit</div>
<div class="badge">Vente à Terme</div>
<div class="kebab"><i style="top:0"></i><i style="top:5px"></i><i style="top:10px"></i></div>
</div>
<div class="row" style="top:700px">
<div class="c c0" style="left:13px;top:14px">6</div>
<div class="c" style="left:54px;top:14px;transform:scaleX(1.000)">2025<span class=d></span>09<span class=d></span>0021</div>
<div class="c" style="left:193px;top:14px;transform:scaleX(1.020)">Pharmacie Camp</div><div class="c" style="left:193px;top:37px;transform:scaleX(0.947)">Guezo</div>
<div class="c" style="left:370px;top:14px;transform:scaleX(0.982)">Jeudi 04 Septembre</div><div class="c" style="left:370px;top:37px;transform:scaleX(0.982)">2025</div>
<div class="c" style="left:568px;top:14px;transform:scaleX(0.936)">55335 XOF</div>
<div class="c" style="left:730px;top:14px;transform:scaleX(0.872)">0 XOF</div>
<div class="c" style="left:834px;top:14px;transform:scaleX(1.004)">55335</div><div class="c" style="left:834px;top:37px;transform:scaleX(0.846)">XOF</div>
<div class="c" style="left:938px;top:14px;transform:scaleX(0.997)">Crédit</div>
<div class="badge">Vente à Terme</div>
<div class="kebab"><i style="top:0"></i><i style="top:5px"></i><i style="top:10px"></i></div>
</div>
<div class="row" style="top:771px">
<div class="c c0" style="left:13px;top:14px">7</div>
<div class="c" style="left:54px;top:14px;transform:scaleX(1.000)">2025<span class=d></span>09<span class=d></span>0020</div>
<div class="c" style="left:193px;top:14px;transform:scaleX(0.880)">PHARMACIE OASIS</div>
<div class="c" style="left:370px;top:14px;transform:scaleX(0.997)">Mercredi 03</div><div class="c" style="left:370px;top:37px;transform:scaleX(1.002)">Septembre 2025</div>
<div class="c" style="left:568px;top:14px;transform:scaleX(0.948)">254400 XOF</div>
<div class="c" style="left:730px;top:14px;transform:scaleX(0.934)">4500 XOF</div>
<div class="c" style="left:834px;top:14px;transform:scaleX(0.992)">249900</div><div class="c" style="left:834px;top:37px;transform:scaleX(0.846)">XOF</div>
<div class="c" style="left:938px;top:14px;transform:scaleX(0.997)">Crédit</div>
<div class="badge">Vente à Terme</div>
<div class="kebab"><i style="top:0"></i><i style="top:5px"></i><i style="top:10px"></i></div>
</div>
<div id="sb"></div>
</body></html>
